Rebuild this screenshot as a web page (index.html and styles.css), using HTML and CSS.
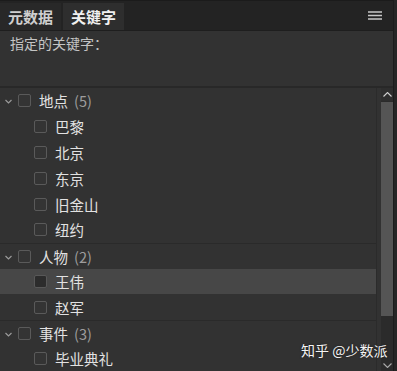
FILE: index.html
```html
<!DOCTYPE html>
<html lang="zh">
  <head>
    <meta charset="UTF-8" />
    <title>关键字</title>
    <link rel="stylesheet" href="styles.css">
  </head>
  <body>
    <div class="panel">
      <div class="panel-main">
        <div class="tabbar">
          <div class="tab">元数据</div>
          <div class="tab active">关键字</div>
          <div class="menu">
            <svg width="14" height="9" viewBox="0 0 14 9">
              <path d="M0 1h14M0 4.5h14M0 8h14" stroke="#c8c8c8" stroke-width="1.3" />
            </svg>
          </div>
        </div>

        <div class="assigned">指定的关键字：</div>

        <div class="tree-area">
          <div class="tree">
            <div class="row group">
              <span class="chev"><svg width="7" height="5" viewBox="0 0 7 5"><path d="M0.5 1l3 3 3-3" fill="none" stroke="#9a9a9a" stroke-width="1.2" /></svg></span>
              <span class="box"></span>
              <span class="label">地点</span><span class="count">(5)</span>
            </div>
            <div class="row child"><span class="box"></span><span class="label">巴黎</span></div>
            <div class="row child"><span class="box"></span><span class="label">北京</span></div>
            <div class="row child"><span class="box"></span><span class="label">东京</span></div>
            <div class="row child"><span class="box"></span><span class="label">旧金山</span></div>
            <div class="row child"><span class="box"></span><span class="label">纽约</span></div>

            <div class="row group sep">
              <span class="chev"><svg width="7" height="5" viewBox="0 0 7 5"><path d="M0.5 1l3 3 3-3" fill="none" stroke="#9a9a9a" stroke-width="1.2" /></svg></span>
              <span class="box"></span>
              <span class="label">人物</span><span class="count">(2)</span>
            </div>
            <div class="row child selected"><span class="box filled"></span><span class="label">王伟</span></div>
            <div class="row child"><span class="box"></span><span class="label">赵军</span></div>

            <div class="row group sep">
              <span class="chev"><svg width="7" height="5" viewBox="0 0 7 5"><path d="M0.5 1l3 3 3-3" fill="none" stroke="#9a9a9a" stroke-width="1.2" /></svg></span>
              <span class="box"></span>
              <span class="label">事件</span><span class="count">(3)</span>
            </div>
            <div class="row child"><span class="box"></span><span class="label">毕业典礼</span></div>
          </div>

          <div class="scrollbar">
            <div class="arrow">
              <svg width="9" height="5" viewBox="0 0 9 5"><path d="M0.5 4.5l4-4 4 4" fill="none" stroke="#d0d0d0" stroke-width="1.1" /></svg>
            </div>
            <div class="thumb"></div>
            <div class="track"></div>
            <div class="arrow down">
              <svg width="9" height="5" viewBox="0 0 9 5"><path d="M0.5 0.5l4 4 4-4" fill="none" stroke="#aaa" stroke-width="1.1" /></svg>
            </div>
          </div>
        </div>
      </div>
      <div class="edge"></div>

      <div class="watermark">知乎 @少数派</div>
    </div>
  </body>
</html>
```

FILE: styles.css
```css
body {
  margin: 0;
  padding: 0;
  background: #323232;
  font-family: "Noto Sans CJK SC", "Noto Sans", sans-serif;
}

.panel {
  position: relative;
  display: flex;
  width: 397px;
  height: 371px;
  overflow: hidden;
  background: #323232;
}

.panel-main {
  flex: 1;
  display: flex;
  flex-direction: column;
  min-width: 0;
}

.edge {
  width: 3px;
  background: #262626;
  border-left: 1px solid #1c1c1c;
}

.tabbar {
  display: flex;
  align-items: stretch;
  height: 27px;
  padding-top: 2px;
  background: #232323;
  border-top: 1px solid #1b1b1b;
  border-bottom: 1px solid #1e1e1e;
}

.tab {
  display: flex;
  align-items: center;
  padding: 0 8px;
  margin-right: 2px;
  font-size: 15px;
  font-weight: bold;
  color: #cfcfcf;
  background: #282828;
}

.tab.active {
  color: #f0f0f0;
  background: #2e2e2e;
}

.menu {
  margin-left: auto;
  display: flex;
  align-items: center;
  padding-right: 11px;
  padding-bottom: 2px;
}

.assigned {
  height: 53px;
  padding: 2px 10px 0;
  font-size: 14px;
  color: #c4c4c4;
  border-bottom: 2px solid #282828;
}

.tree-area {
  flex: 1;
  display: flex;
  min-height: 0;
}

.tree {
  flex: 1;
  margin-right: 4px;
  border-right: 1px solid #2b2b2b;
}

.row {
  display: flex;
  align-items: center;
  height: 25.8px;
  box-sizing: border-box;
  font-size: 14.5px;
  color: #e2e2e2;
}

.row.sep {
  border-top: 1px solid #2a2a2a;
}

.row.group {
  padding-left: 5px;
}

.row.child {
  padding-left: 34px;
}

.row.selected {
  background: #474747;
}

.chev {
  display: flex;
  width: 8px;
  margin-right: 5px;
  margin-top: 2px;
}

.box {
  width: 11px;
  height: 11px;
  margin-right: 8px;
  border: 1.5px solid #5a5a5a;
  border-radius: 2px;
  background: #343434;
}

.box.filled {
  background: #2c2c2c;
  border-color: #585858;
}

.count {
  margin-left: 6px;
  color: #9d9d9d;
}

.scrollbar {
  width: 12px;
  display: flex;
  flex-direction: column;
  background: #2b2b2b;
}

.arrow {
  height: 13px;
  display: flex;
  align-items: center;
  justify-content: center;
  background: #2e2e2e;
}

.arrow.down {
  background: #2b2b2b;
  height: 12px;
}

.thumb {
  height: 214px;
  margin-top: 1px;
  background: #555555;
}

.track {
  flex: 1;
}

.watermark {
  position: absolute;
  left: 301px;
  top: 340px;
  font-size: 14px;
  white-space: nowrap;
  color: #f4f4f4;
  text-shadow: 0 0 2px rgba(0, 0, 0, 0.6);
}
```
